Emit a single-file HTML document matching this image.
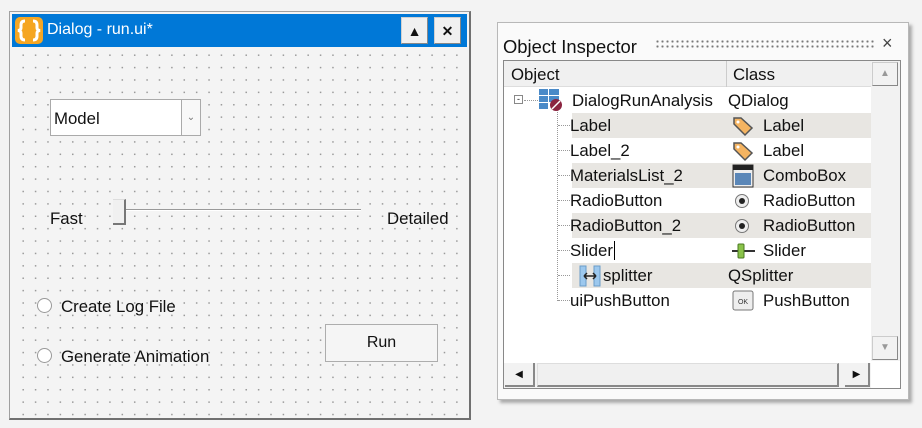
<!DOCTYPE html>
<html><head><style>
*{margin:0;padding:0;box-sizing:border-box}
body{width:922px;height:428px;background:#f3f3f3;font-family:"Liberation Sans",sans-serif;position:relative;overflow:hidden;color:#111}
.abs{position:absolute}
#dlg{left:9px;top:11px;width:462px;height:409px;border:1px solid #a0a0a0;border-right:2px solid #707070;border-bottom:2px solid #707070;background:#f4f4f4}
#title{left:12px;top:14px;width:455px;height:33px;background:#0078d7}
#grid{left:12px;top:47px;width:455px;height:370px;background-image:radial-gradient(circle,#9a9a9a 0.8px,transparent 1px);background-size:12.4px 12.4px;background-position:5px 2px}
.tb{width:27px;height:27px;background:#f0f0f0;border:1px solid #d0d0d0;border-right-color:#888;border-bottom-color:#888;font-size:14px;text-align:center;line-height:26px;color:#111}
.t15{font-size:16.8px}
.radio{width:15px;height:15px;border:1px solid #999;border-radius:50%;background:#fff}
#insp{left:497px;top:22px;width:412px;height:378px;border:1px solid #b8b8b8;background:#fafafa;box-shadow:3px 3px 3px #aaa}
.row{position:absolute;left:0;width:400px;height:25px;font-size:16.8px;line-height:26px}
.sh{background:#e8e6e2}
</style></head><body>
<div class="abs" id="dlg"></div>
<div class="abs" id="grid"></div>
<div class="abs" id="title"></div>
<svg class="abs" style="left:14px;top:16px" width="30" height="29"><rect x="1" y="1" width="28" height="27" rx="5" fill="#f5a623"/><path d="M11 5 q-4 0 -4 4 v3 q0 2 -3 2.5 q3 .5 3 2.5 v3 q0 4 4 4 M19 5 q4 0 4 4 v3 q0 2 3 2.5 q-3 .5 -3 2.5 v3 q0 4 -4 4" stroke="#fff" stroke-width="3" fill="none"/></svg>
<div class="abs" style="left:47px;top:21px;color:#fff;font-size:16px">Dialog - run.ui*</div>
<div class="abs tb" style="left:401px;top:17px">▲</div>
<div class="abs tb" style="left:434px;top:17px;font-weight:bold">✕</div>
<div class="abs" style="left:50px;top:99px;width:151px;height:37px;border:1px solid #aaa;background:#fff"></div>
<div class="abs" style="left:181px;top:99px;width:20px;height:37px;border:1px solid #aaa;background:#f8f8f8;font-size:10px;color:#777;text-align:center;line-height:35px">⌄</div>
<div class="abs t15" style="left:54px;top:109px">Model</div>
<div class="abs t15" style="left:50px;top:209px">Fast</div>
<div class="abs" style="left:124px;top:209px;width:237px;height:2px;border-top:1px solid #999;border-bottom:1px solid #fff"></div>
<div class="abs" style="left:113px;top:199px;width:13px;height:26px;border-right:2px solid #777;border-bottom:2px solid #777;border-top:1px solid #ddd;background:#f0f0f0"></div>
<div class="abs t15" style="left:387px;top:209px">Detailed</div>
<div class="abs radio" style="left:37px;top:298px"></div>
<div class="abs t15" style="left:61px;top:297px">Create Log File</div>
<div class="abs radio" style="left:37px;top:348px"></div>
<div class="abs t15" style="left:61px;top:347px">Generate Animation</div>
<div class="abs" style="left:325px;top:324px;width:113px;height:38px;border:1px solid #adadad;background:#f5f5f5;font-size:16px;text-align:center;line-height:36px">Run</div>

<div class="abs" id="insp"></div>
<div class="abs" style="left:503px;top:36px;font-size:18.4px">Object Inspector</div>
<div class="abs" style="left:655px;top:39px;width:220px;height:10px;background-image:radial-gradient(circle,#777 1px,transparent 1.2px);background-size:5px 5px"></div>
<div class="abs" style="left:882px;top:33px;font-size:18px;color:#444">×</div>
<div class="abs" style="left:503px;top:60px;width:398px;height:329px;border:1px solid #888;background:#fff"></div>
<div class="abs" style="left:504px;top:61px;width:367px;height:26px;background:#f0f0f0;border-bottom:1px solid #ddd"></div>
<div class="abs" style="left:726px;top:61px;width:1px;height:26px;background:#ccc"></div>
<div class="abs t15" style="left:511px;top:65px">Object</div>
<div class="abs t15" style="left:733px;top:65px">Class</div>
<div class="abs" style="left:871px;top:61px;width:29px;height:300px;background:#f2f2f2"></div>
<div class="abs" style="left:872px;top:62px;width:26px;height:24px;border:1px solid #ccc;border-right-color:#888;border-bottom-color:#888;font-size:10px;color:#999;text-align:center;line-height:22px">▲</div>
<div class="abs" style="left:872px;top:336px;width:26px;height:24px;border:1px solid #ccc;border-right-color:#888;border-bottom-color:#888;font-size:10px;color:#999;text-align:center;line-height:22px">▼</div>
<div class="abs" style="left:504px;top:363px;width:367px;height:25px;background:#f2f2f2"></div>
<div class="abs" style="left:505px;top:363px;width:30px;height:24px;border-right:2px solid #888;border-bottom:2px solid #888;font-size:10px;text-align:center;line-height:24px">◀</div>
<div class="abs" style="left:537px;top:363px;width:302px;height:24px;border:1px solid #ddd;border-right:2px solid #888;border-bottom:2px solid #888;background:#f0f0f0"></div>
<div class="abs" style="left:845px;top:363px;width:25px;height:24px;border-right:2px solid #888;border-bottom:2px solid #888;font-size:10px;text-align:center;line-height:24px">▶</div>

<div class="abs" style="left:505px;top:88px;width:366px;height:225px">
<div class="row sh" style="top:25px;left:67px;width:299px"></div>
<div class="row sh" style="top:75px;left:67px;width:299px"></div>
<div class="row sh" style="top:125px;left:67px;width:299px"></div>
<div class="row sh" style="top:175px;left:67px;width:299px"></div>
<div class="abs" style="left:52px;top:20px;width:1px;height:193px;border-left:1px dotted #999"></div>
<div class="abs" style="left:9px;top:7px;width:9px;height:9px;border:1px solid #888;background:#fff;font-size:9px;line-height:6px;text-align:center">-</div>
<div class="abs" style="left:19px;top:12px;width:14px;border-top:1px dotted #999"></div>
<svg class="abs" style="left:33px;top:0" width="26" height="24"><rect x="1" y="1" width="9" height="6" fill="#4a8ac8"/><rect x="11" y="1" width="10" height="6" fill="#4a8ac8"/><rect x="1" y="8" width="9" height="6" fill="#4a8ac8"/><rect x="11" y="8" width="10" height="6" fill="#4a8ac8"/><rect x="1" y="15" width="9" height="6" fill="#4a8ac8"/><circle cx="18" cy="17" r="6" fill="#8b2440"/><path d="M14 21 L22 13" stroke="#fff" stroke-width="1.5"/></svg>
<div class="row" style="top:0;left:67px">DialogRunAnalysis</div><div class="row" style="top:0;left:223px">QDialog</div>
<div class="row" style="top:25px;left:65px">Label</div><div class="row" style="top:25px;left:258px">Label</div>
<div class="row" style="top:50px;left:65px">Label_2</div><div class="row" style="top:50px;left:258px">Label</div>
<div class="row" style="top:75px;left:65px">MaterialsList_2</div><div class="row" style="top:75px;left:258px">ComboBox</div>
<div class="row" style="top:100px;left:65px">RadioButton</div><div class="row" style="top:100px;left:258px">RadioButton</div>
<div class="row" style="top:125px;left:65px">RadioButton_2</div><div class="row" style="top:125px;left:258px">RadioButton</div>
<div class="row" style="top:150px;left:65px">Slider<span style="border-left:1px solid #000;margin-left:1px"></span></div><div class="row" style="top:150px;left:258px">Slider</div>
<div class="row" style="top:175px;left:98px">splitter</div><div class="row" style="top:175px;left:223px">QSplitter</div>
<div class="row" style="top:200px;left:65px">uiPushButton</div><div class="row" style="top:200px;left:258px">PushButton</div>
<div class="abs" style="left:53px;top:37px;width:12px;border-top:1px dotted #999"></div>
<div class="abs" style="left:53px;top:62px;width:12px;border-top:1px dotted #999"></div>
<div class="abs" style="left:53px;top:87px;width:12px;border-top:1px dotted #999"></div>
<div class="abs" style="left:53px;top:112px;width:12px;border-top:1px dotted #999"></div>
<div class="abs" style="left:53px;top:137px;width:12px;border-top:1px dotted #999"></div>
<div class="abs" style="left:53px;top:162px;width:12px;border-top:1px dotted #999"></div>
<div class="abs" style="left:53px;top:187px;width:12px;border-top:1px dotted #999"></div>
<div class="abs" style="left:53px;top:212px;width:12px;border-top:1px dotted #999"></div>
<svg class="abs" style="left:226px;top:27px" width="24" height="22"><path d="M3 3 L10 3 L21 13 L14 20 L3 9 Z" fill="#f5b461" stroke="#555" stroke-width="1.5"/><circle cx="7" cy="7" r="1.5" fill="#fff"/></svg>
<svg class="abs" style="left:226px;top:52px" width="24" height="22"><path d="M3 3 L10 3 L21 13 L14 20 L3 9 Z" fill="#f5b461" stroke="#555" stroke-width="1.5"/><circle cx="7" cy="7" r="1.5" fill="#fff"/></svg>
<svg class="abs" style="left:227px;top:76px" width="22" height="24"><rect x="1" y="1" width="20" height="22" fill="#eee" stroke="#333"/><rect x="1" y="1" width="20" height="5" fill="#222"/><rect x="3" y="9" width="16" height="12" fill="#5b87b8"/></svg>
<svg class="abs" style="left:229px;top:105px" width="18" height="16"><circle cx="8" cy="8" r="6.5" fill="#eee" stroke="#777"/><circle cx="8" cy="8" r="3" fill="#222"/></svg>
<svg class="abs" style="left:229px;top:130px" width="18" height="16"><circle cx="8" cy="8" r="6.5" fill="#eee" stroke="#777"/><circle cx="8" cy="8" r="3" fill="#222"/></svg>
<svg class="abs" style="left:226px;top:154px" width="26" height="18"><path d="M1 9 H24" stroke="#333" stroke-width="2"/><rect x="7" y="2" width="6" height="14" rx="1" fill="#8ac34a" stroke="#4a7a20"/></svg>
<svg class="abs" style="left:74px;top:177px" width="22" height="22"><rect x="1" y="1" width="6" height="20" fill="#9cc8ee" stroke="#6a9cc8"/><rect x="15" y="1" width="6" height="20" fill="#9cc8ee" stroke="#6a9cc8"/><path d="M5 11 H17 M5 11 l3 -3 M5 11 l3 3 M17 11 l-3 -3 M17 11 l-3 3" stroke="#222" stroke-width="1.5" fill="none"/></svg>
<svg class="abs" style="left:227px;top:202px" width="22" height="22"><rect x="1" y="1" width="20" height="19" rx="2" fill="#eee" stroke="#777"/><text x="11" y="14" font-size="7" text-anchor="middle" font-family="Liberation Sans" fill="#333">OK</text></svg>
</div>
</body></html>
